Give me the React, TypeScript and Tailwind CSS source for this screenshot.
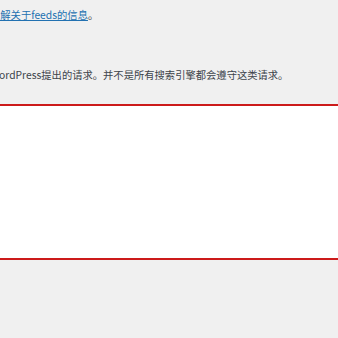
export default function App() {
  return (
    <div
      className="h-[338px] w-[338px] overflow-hidden bg-[#f0f0f0] text-[10.3px] text-[#3c434a]"
      style={{ fontFamily: '"Noto Sans CJK SC", "Noto Sans", sans-serif' }}
    >
      <p className="ml-[-10px] mt-[5px] whitespace-nowrap leading-[19px]">
        <a href="#" className="text-[#2271b1] underline">
          了解关于feeds的信息
        </a>
        。
      </p>
      <p className="ml-[-10px] mt-[41px] whitespace-nowrap leading-[19px]">
        WordPress提出的请求。并不是所有搜索引擎都会遵守这类请求。
      </p>
      <div className="mt-[20px] h-[156px] w-full border-y-2 border-y-[#cc1a1a] bg-white" />
    </div>
  );
}
